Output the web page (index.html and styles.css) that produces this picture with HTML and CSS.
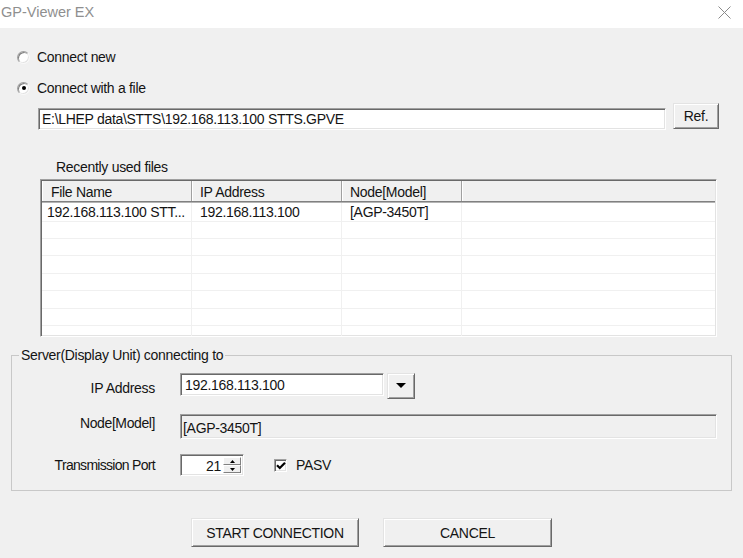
FILE: index.html
```html
<!DOCTYPE html>
<html lang="en">
<head>
<meta charset="utf-8">
<title>GP-Viewer EX</title>
<link rel="stylesheet" href="styles.css">
</head>
<body>
<div class="titlebar">
  <span class="title">GP-Viewer EX</span>
  <svg class="close" viewBox="0 0 13 13" width="13" height="13"><path d="M0.5 0.5 L12.5 12.5 M12.5 0.5 L0.5 12.5" stroke="#8a8a8a" stroke-width="1" fill="none"/></svg>
</div>
<div class="dialog">
  <div class="radio-row"><span class="radio"></span><span>Connect new</span></div>
  <div class="radio-row"><span class="radio checked"><span class="dot"></span></span><span>Connect with a file</span></div>
  <div class="file-row">
    <div class="field file-field">E:\LHEP data\STTS\192.168.113.100 STTS.GPVE</div>
    <div class="btn ref-btn">Ref.</div>
  </div>
  <div class="recent-label">Recently used files</div>
  <div class="listview">
    <div class="lv-header">
      <div class="hcell c1">File Name</div>
      <div class="hcell">IP Address</div>
      <div class="hcell">Node[Model]</div>
      <div class="hcell last"></div>
    </div>
    <div class="lv-body">
      <div class="lv-row first"><div class="cell c1">192.168.113.100 STT...</div><div class="cell">192.168.113.100</div><div class="cell">[AGP-3450T]</div><div class="cell"></div></div>
      <div class="lv-row"><div class="cell c1"></div><div class="cell"></div><div class="cell"></div><div class="cell"></div></div>
      <div class="lv-row"><div class="cell c1"></div><div class="cell"></div><div class="cell"></div><div class="cell"></div></div>
      <div class="lv-row"><div class="cell c1"></div><div class="cell"></div><div class="cell"></div><div class="cell"></div></div>
      <div class="lv-row"><div class="cell c1"></div><div class="cell"></div><div class="cell"></div><div class="cell"></div></div>
      <div class="lv-row"><div class="cell c1"></div><div class="cell"></div><div class="cell"></div><div class="cell"></div></div>
      <div class="lv-row"><div class="cell c1"></div><div class="cell"></div><div class="cell"></div><div class="cell"></div></div>
      <div class="lv-row"><div class="cell c1"></div><div class="cell"></div><div class="cell"></div><div class="cell"></div></div>
    </div>
  </div>
  <fieldset class="group">
    <legend>Server(Display Unit) connecting to</legend>
    <div class="form-grid">
      <div class="label lbl-ip">IP Address</div>
      <div class="combo">
        <div class="field combo-field">192.168.113.100</div>
        <div class="btn drop-btn"><svg width="10" height="5" viewBox="0 0 10 5"><path d="M0 0 H10 L5 5 Z" fill="#000"/></svg></div>
      </div>
      <div class="label lbl-node">Node[Model]</div>
      <div class="field ro-field">[AGP-3450T]</div>
      <div class="label lbl-port">Transmission Port</div>
      <div class="port-row">
        <div class="field spinner">
          <span class="spin-val">21</span>
          <span class="updown">
            <span class="spin-btn"><svg width="5" height="3" viewBox="0 0 5 3"><path d="M0 3 H5 L2.5 0 Z" fill="#000"/></svg></span>
            <span class="spin-btn"><svg width="5" height="3" viewBox="0 0 5 3"><path d="M0 0 H5 L2.5 3 Z" fill="#000"/></svg></span>
          </span>
        </div>
        <span class="checkbox"><svg width="10" height="9" viewBox="0 0 10 9"><path d="M1 4.2 L3.8 7 L9 1.8" stroke="#000" stroke-width="2.2" fill="none"/></svg></span>
        <span class="pasv">PASV</span>
      </div>
    </div>
  </fieldset>
  <div class="actions">
    <div class="btn action-btn start">START CONNECTION</div>
    <div class="btn action-btn cancel">CANCEL</div>
  </div>
</div>
</body>
</html>
```
FILE: styles.css
```css
* { box-sizing: border-box; }
html, body { margin: 0; padding: 0; }
body {
  width: 743px;
  height: 558px;
  overflow: hidden;
  background: #f0f0f0;
  font-family: "Liberation Sans", Arial, sans-serif;
  font-size: 14px;
  letter-spacing: -0.3px;
  color: #141414;
}
.titlebar {
  height: 28px;
  background: #fff;
  display: flex;
  justify-content: space-between;
  align-items: flex-start;
  padding: 4px 12px 0 1px;
}
.title { line-height: 16px; color: #8f8f8f; letter-spacing: 0; font-size: 14.5px; }
.close { margin-top: 2px; display: block; }

.dialog { padding-top: 19px; }

.radio-row {
  display: flex;
  align-items: center;
  height: 20px;
  margin-left: 17px;
  line-height: 16px;
}
.radio-row + .radio-row { margin-top: 11px; }
.radio {
  width: 13px;
  height: 13px;
  border-radius: 50%;
  background: #fff;
  border: 1px solid;
  border-color: #a0a0a0 #f8f8f8 #f8f8f8 #a0a0a0;
  box-shadow: inset 1px 1px 0 #808080, inset -1px -1px 0 #e3e3e3;
  margin-right: 7px;
  display: grid;
  place-items: center;
}
.dot { width: 4px; height: 4px; border-radius: 50%; background: #000; }

.field {
  background: #fff;
  border: 1px solid;
  border-color: #a0a0a0 #fff #fff #a0a0a0;
  box-shadow: inset 1px 1px 0 #696969, inset -1px -1px 0 #e3e3e3;
  line-height: 16px;
  white-space: nowrap;
  overflow: hidden;
}
.btn {
  background: #f0f0f0;
  border: 1px solid;
  border-color: #e3e3e3 #696969 #696969 #e3e3e3;
  box-shadow: inset 1px 1px 0 #fff, inset -1px -1px 0 #a0a0a0;
  display: flex;
  align-items: center;
  justify-content: center;
  line-height: 16px;
}

.file-row {
  display: flex;
  align-items: flex-start;
  gap: 7px;
  margin: 5px 0 0 38px;
}
.file-field {
  width: 628px;
  height: 22px;
  margin-top: 5px;
  padding: 2px 0 0 3px;
}
.ref-btn { width: 46px; height: 26px; }

.recent-label { margin: 29px 0 0 56px; line-height: 16px; }

.listview {
  margin: 4px 0 0 40px;
  width: 677px;
  height: 158px;
  background: #fff;
  border: 1px solid;
  border-color: #a0a0a0 #fff #fff #a0a0a0;
  box-shadow: inset 1px 1px 0 #696969, inset -1px -1px 0 #e3e3e3;
  padding: 1px;
  overflow: hidden;
}
.lv-header {
  display: grid;
  grid-template-columns: 150px 150px 120px 1fr;
  height: 21px;
  background: #f0f0f0;
  border-bottom: 1px solid #808080;
  box-shadow: 0 1px 0 #b4b4b4;
}
.hcell {
  border-right: 1px solid #a0a0a0;
  box-shadow: inset 1px 0 0 #fff;
  padding: 3px 0 0 8px;
  line-height: 16px;
  white-space: nowrap;
}
.hcell.c1 { padding-left: 9px; }
.hcell.last { border-right: none; }
.lv-body { margin-top: 1px; }
.lv-row {
  display: grid;
  grid-template-columns: 150px 150px 120px 1fr;
  height: 17.4px;
  border-bottom: 1px solid #f0f0f0;
}
.lv-row.first { height: 18.7px; }
.cell {
  border-right: 1px solid #f0f0f0;
  padding-left: 8px;
  line-height: 16px;
  white-space: nowrap;
  overflow: hidden;
}
.lv-row.first .cell { padding-top: 1px; }
.cell.c1 { padding-left: 5px; }
.cell:last-child { border-right: none; }

.group {
  margin: 10px 11px 0 11px;
  border: 1px solid #c8c8c8;
  padding: 10px 14px 14px 0;
  min-width: 0;
}
.group legend {
  margin-left: 7px;
  padding: 0 2px;
  line-height: 16px;
}
.form-grid {
  display: grid;
  grid-template-columns: 143px 1fr;
  grid-template-rows: 26px 25px 22px;
  column-gap: 25px;
  row-gap: 15px;
}
.label {
  text-align: right;
  align-self: center;
  line-height: 16px;
  white-space: nowrap;
}
.lbl-ip { margin-top: 4px; }
.lbl-node { margin-bottom: 7px; letter-spacing: -0.4px; }
.lbl-port { letter-spacing: -0.7px; }

.combo { display: flex; align-items: flex-start; gap: 3px; }
.combo-field { width: 204px; height: 23px; padding: 3px 0 0 4px; }
.drop-btn { width: 28px; height: 26px; padding-bottom: 1px; }

.ro-field {
  background: #f0f0f0;
  height: 25px;
  padding: 5px 0 0 2px;
}

.port-row { display: flex; align-items: center; }
.spinner {
  width: 64px;
  height: 22px;
  display: flex;
  align-items: stretch;
  padding: 2px;
}
.spin-val { flex: 1; text-align: right; padding-right: 2px; line-height: 18px; }
.updown { width: 18px; display: flex; flex-direction: column; }
.spin-btn {
  flex: 1;
  background: #f0f0f0;
  border: 1px solid;
  border-color: #fff #808080 #808080 #fff;
  display: flex;
  align-items: center;
  justify-content: center;
}
.spin-btn svg { display: block; }
.checkbox {
  width: 13px;
  height: 13px;
  margin-left: 30px;
  background: #fff;
  border: 1px solid;
  border-color: #a0a0a0 #fff #fff #a0a0a0;
  box-shadow: inset 1px 1px 0 #696969, inset -1px -1px 0 #e3e3e3;
  display: grid;
  place-items: center;
}
.checkbox svg { display: block; }
.pasv { margin-left: 9px; line-height: 16px; }

.actions {
  display: flex;
  justify-content: center;
  gap: 24px;
  margin-top: 27px;
}
.action-btn { height: 29px; }
.start { width: 168px; }
.cancel { width: 169px; }
```
